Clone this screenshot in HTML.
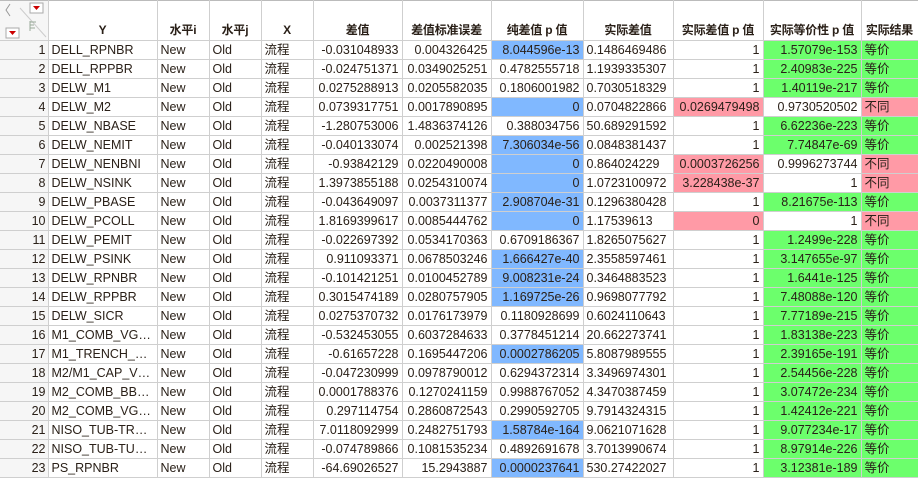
<!DOCTYPE html><html><head><meta charset="utf-8"><style>
body{margin:0;background:#fff;width:918px;height:477px;overflow:hidden;font-family:"Liberation Sans","Noto Sans CJK SC",sans-serif;font-size:12px;color:#2a2018}
table{border-collapse:collapse;table-layout:fixed;width:918px;position:absolute;left:0;top:0}
td,th{border-right:1px solid #cfcfcf;border-bottom:1px solid #cfcfcf;padding:0 2px 0 3px;height:18px;line-height:18px;white-space:nowrap;overflow:hidden}
td{font-size:12.5px}
th{height:38px;vertical-align:bottom;font-weight:bold;text-align:center;line-height:17px;padding:0 0 1px 0;border-top:1px solid #bbb;font-size:12px;letter-spacing:-0.2px}
td.r{text-align:right;padding-right:3px}
td.n{text-align:right;background:#f6f6f6}
td.y{text-overflow:ellipsis}
.b{background:#80b8ff}.p{background:#ff9aa6}.g{background:#6cff6c}
</style></head><body>
<table>
<colgroup><col style="width:48px"><col style="width:109px"><col style="width:52px"><col style="width:52px"><col style="width:52px"><col style="width:89px"><col style="width:89px"><col style="width:92px"><col style="width:90px"><col style="width:90px"><col style="width:98px"><col style="width:57px"></colgroup>
<tr><th style="position:relative;background:#f6f6f6"><svg width="48" height="38" style="position:absolute;left:0;top:0"><path d="M10 3 L6 9 L10 15" fill="none" stroke="#999"/><line x1="20" y1="7" x2="46" y2="36" stroke="#ccc"/><rect x="30" y="2" width="13" height="10" fill="#fff" stroke="#aaa"/><path d="M33 5 L40 5 L36.5 9Z" fill="#c00"/><rect x="6" y="27" width="13" height="10" fill="#fff" stroke="#aaa"/><path d="M9 30 L16 30 L12.5 34Z" fill="#c00"/><path d="M30 20 v10 M30 21 h6 M30 24 h4 M30 27 h5" stroke="#9a9" /></svg></th><th>Y</th><th>水平i</th><th>水平j</th><th>X</th><th>差值</th><th>差值标准误差</th><th>纯差值 p 值</th><th>实际差值</th><th>实际差值 p 值</th><th>实际等价性 p 值</th><th>实际结果</th></tr>
<tr><td class="n">1</td><td class="y">DELL_RPNBR</td><td>New</td><td>Old</td><td>流程</td><td class="r">-0.031048933</td><td class="r">0.004326425</td><td class="r b">8.044596e-13</td><td>0.1486469486</td><td class="r">1</td><td class="r g">1.57079e-153</td><td class="g">等价</td></tr>
<tr><td class="n">2</td><td class="y">DELL_RPPBR</td><td>New</td><td>Old</td><td>流程</td><td class="r">-0.024751371</td><td class="r">0.0349025251</td><td class="r">0.4782555718</td><td>1.1939335307</td><td class="r">1</td><td class="r g">2.40983e-225</td><td class="g">等价</td></tr>
<tr><td class="n">3</td><td class="y">DELW_M1</td><td>New</td><td>Old</td><td>流程</td><td class="r">0.0275288913</td><td class="r">0.0205582035</td><td class="r">0.1806001982</td><td>0.7030518329</td><td class="r">1</td><td class="r g">1.40119e-217</td><td class="g">等价</td></tr>
<tr><td class="n">4</td><td class="y">DELW_M2</td><td>New</td><td>Old</td><td>流程</td><td class="r">0.0739317751</td><td class="r">0.0017890895</td><td class="r b">0</td><td>0.0704822866</td><td class="r p">0.0269479498</td><td class="r">0.9730520502</td><td class="p">不同</td></tr>
<tr><td class="n">5</td><td class="y">DELW_NBASE</td><td>New</td><td>Old</td><td>流程</td><td class="r">-1.280753006</td><td class="r">1.4836374126</td><td class="r">0.388034756</td><td>50.689291592</td><td class="r">1</td><td class="r g">6.62236e-223</td><td class="g">等价</td></tr>
<tr><td class="n">6</td><td class="y">DELW_NEMIT</td><td>New</td><td>Old</td><td>流程</td><td class="r">-0.040133074</td><td class="r">0.002521398</td><td class="r b">7.306034e-56</td><td>0.0848381437</td><td class="r">1</td><td class="r g">7.74847e-69</td><td class="g">等价</td></tr>
<tr><td class="n">7</td><td class="y">DELW_NENBNI</td><td>New</td><td>Old</td><td>流程</td><td class="r">-0.93842129</td><td class="r">0.0220490008</td><td class="r b">0</td><td>0.864024229</td><td class="r p">0.0003726256</td><td class="r">0.9996273744</td><td class="p">不同</td></tr>
<tr><td class="n">8</td><td class="y">DELW_NSINK</td><td>New</td><td>Old</td><td>流程</td><td class="r">1.3973855188</td><td class="r">0.0254310074</td><td class="r b">0</td><td>1.0723100972</td><td class="r p">3.228438e-37</td><td class="r">1</td><td class="p">不同</td></tr>
<tr><td class="n">9</td><td class="y">DELW_PBASE</td><td>New</td><td>Old</td><td>流程</td><td class="r">-0.043649097</td><td class="r">0.0037311377</td><td class="r b">2.908704e-31</td><td>0.1296380428</td><td class="r">1</td><td class="r g">8.21675e-113</td><td class="g">等价</td></tr>
<tr><td class="n">10</td><td class="y">DELW_PCOLL</td><td>New</td><td>Old</td><td>流程</td><td class="r">1.8169399617</td><td class="r">0.0085444762</td><td class="r b">0</td><td>1.17539613</td><td class="r p">0</td><td class="r">1</td><td class="p">不同</td></tr>
<tr><td class="n">11</td><td class="y">DELW_PEMIT</td><td>New</td><td>Old</td><td>流程</td><td class="r">-0.022697392</td><td class="r">0.0534170363</td><td class="r">0.6709186367</td><td>1.8265075627</td><td class="r">1</td><td class="r g">1.2499e-228</td><td class="g">等价</td></tr>
<tr><td class="n">12</td><td class="y">DELW_PSINK</td><td>New</td><td>Old</td><td>流程</td><td class="r">0.911093371</td><td class="r">0.0678503246</td><td class="r b">1.666427e-40</td><td>2.3558597461</td><td class="r">1</td><td class="r g">3.147655e-97</td><td class="g">等价</td></tr>
<tr><td class="n">13</td><td class="y">DELW_RPNBR</td><td>New</td><td>Old</td><td>流程</td><td class="r">-0.101421251</td><td class="r">0.0100452789</td><td class="r b">9.008231e-24</td><td>0.3464883523</td><td class="r">1</td><td class="r g">1.6441e-125</td><td class="g">等价</td></tr>
<tr><td class="n">14</td><td class="y">DELW_RPPBR</td><td>New</td><td>Old</td><td>流程</td><td class="r">0.3015474189</td><td class="r">0.0280757905</td><td class="r b">1.169725e-26</td><td>0.9698077792</td><td class="r">1</td><td class="r g">7.48088e-120</td><td class="g">等价</td></tr>
<tr><td class="n">15</td><td class="y">DELW_SICR</td><td>New</td><td>Old</td><td>流程</td><td class="r">0.0275370732</td><td class="r">0.0176173979</td><td class="r">0.1180928699</td><td>0.6024110643</td><td class="r">1</td><td class="r g">7.77189e-215</td><td class="g">等价</td></tr>
<tr><td class="n">16</td><td class="y">M1_COMB_VGA…</td><td>New</td><td>Old</td><td>流程</td><td class="r">-0.532453055</td><td class="r">0.6037284633</td><td class="r">0.3778451214</td><td>20.662273741</td><td class="r">1</td><td class="r g">1.83138e-223</td><td class="g">等价</td></tr>
<tr><td class="n">17</td><td class="y">M1_TRENCH_V…</td><td>New</td><td>Old</td><td>流程</td><td class="r">-0.61657228</td><td class="r">0.1695447206</td><td class="r b">0.0002786205</td><td>5.8087989555</td><td class="r">1</td><td class="r g">2.39165e-191</td><td class="g">等价</td></tr>
<tr><td class="n">18</td><td class="y">M2/M1_CAP_V…</td><td>New</td><td>Old</td><td>流程</td><td class="r">-0.047230999</td><td class="r">0.0978790012</td><td class="r">0.6294372314</td><td>3.3496974301</td><td class="r">1</td><td class="r g">2.54456e-228</td><td class="g">等价</td></tr>
<tr><td class="n">19</td><td class="y">M2_COMB_BB_…</td><td>New</td><td>Old</td><td>流程</td><td class="r">0.0001788376</td><td class="r">0.1270241159</td><td class="r">0.9988767052</td><td>4.3470387459</td><td class="r">1</td><td class="r g">3.07472e-234</td><td class="g">等价</td></tr>
<tr><td class="n">20</td><td class="y">M2_COMB_VGA…</td><td>New</td><td>Old</td><td>流程</td><td class="r">0.297114754</td><td class="r">0.2860872543</td><td class="r">0.2990592705</td><td>9.7914324315</td><td class="r">1</td><td class="r g">1.42412e-221</td><td class="g">等价</td></tr>
<tr><td class="n">21</td><td class="y">NISO_TUB-TRE…</td><td>New</td><td>Old</td><td>流程</td><td class="r">7.0118092999</td><td class="r">0.2482751793</td><td class="r b">1.58784e-164</td><td>9.0621071628</td><td class="r">1</td><td class="r g">9.077234e-17</td><td class="g">等价</td></tr>
<tr><td class="n">22</td><td class="y">NISO_TUB-TUB…</td><td>New</td><td>Old</td><td>流程</td><td class="r">-0.074789866</td><td class="r">0.1081535234</td><td class="r">0.4892691678</td><td>3.7013990674</td><td class="r">1</td><td class="r g">8.97914e-226</td><td class="g">等价</td></tr>
<tr><td class="n">23</td><td class="y">PS_RPNBR</td><td>New</td><td>Old</td><td>流程</td><td class="r">-64.69026527</td><td class="r">15.2943887</td><td class="r b">0.0000237641</td><td>530.27422027</td><td class="r">1</td><td class="r g">3.12381e-189</td><td class="g">等价</td></tr>
</table>
</body></html>
